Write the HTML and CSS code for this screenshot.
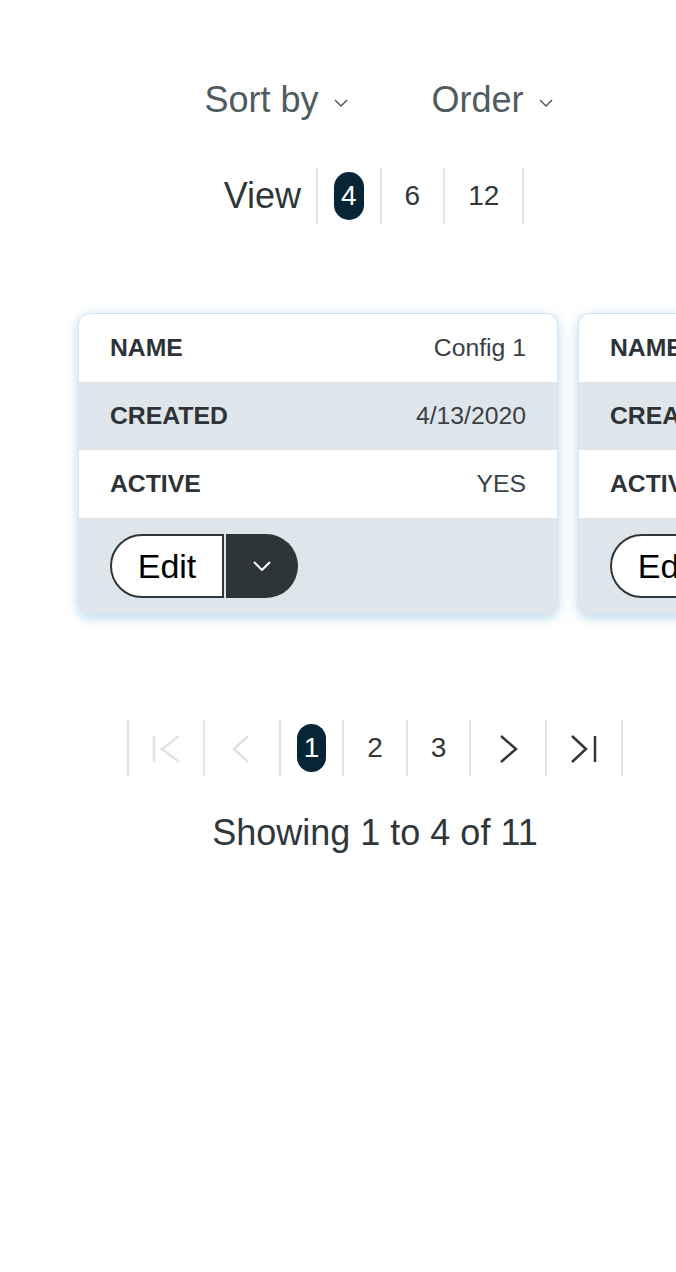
FILE: index.html
```html
<!DOCTYPE html>
<html lang="en">
<head>
<meta charset="utf-8">
<title>Configurations</title>
<link rel="stylesheet" href="styles.css">
</head>
<body>
<div class="page">
  <div class="sort-row">
    <button class="dd">Sort by <svg class="dd-chev" width="14" height="8" viewBox="0 0 14 8"><polyline points="1,1 7,7 13,1" fill="none" stroke="currentColor" stroke-width="1.5"/></svg></button>
    <button class="dd">Order <svg class="dd-chev" width="14" height="8" viewBox="0 0 14 8"><polyline points="1,1 7,7 13,1" fill="none" stroke="currentColor" stroke-width="1.5"/></svg></button>
  </div>

  <div class="view-row">
    <span class="view-label">View</span>
    <div class="seg">
      <div class="seg-item"><span class="pill active">4</span></div>
      <div class="seg-item"><span class="pill">6</span></div>
      <div class="seg-item"><span class="pill">12</span></div>
    </div>
  </div>

  <div class="cards">
    <div class="card">
      <div class="row"><span class="label">NAME</span><span class="value">Config 1</span></div>
      <div class="row alt"><span class="label">CREATED</span><span class="value">4/13/2020</span></div>
      <div class="row"><span class="label">ACTIVE</span><span class="value">YES</span></div>
      <div class="row alt actions">
        <button class="edit">Edit</button><button class="more"><svg width="18" height="10" viewBox="0 0 18 10"><polyline points="1,1 9,9 17,1" fill="none" stroke="#fff" stroke-width="2"/></svg></button>
      </div>
    </div>
    <div class="card">
      <div class="row"><span class="label">NAME</span><span class="value">Config 2</span></div>
      <div class="row alt"><span class="label">CREATED</span><span class="value">4/13/2020</span></div>
      <div class="row"><span class="label">ACTIVE</span><span class="value">YES</span></div>
      <div class="row alt actions">
        <button class="edit">Edit</button><button class="more"><svg width="18" height="10" viewBox="0 0 18 10"><polyline points="1,1 9,9 17,1" fill="none" stroke="#fff" stroke-width="2"/></svg></button>
      </div>
    </div>
  </div>

  <nav class="pager">
    <div class="seg-item icon-item disabled"><svg width="42" height="48" viewBox="0 0 42 48"><line x1="9" y1="12" x2="9" y2="38" stroke="currentColor" stroke-width="2.5"/><polyline points="34,12 17,25 34,38" fill="none" stroke="currentColor" stroke-width="2.5"/></svg></div>
    <div class="seg-item icon-item disabled"><svg width="42" height="48" viewBox="0 0 42 48"><polyline points="27,12 13,25 27,38" fill="none" stroke="currentColor" stroke-width="2.5"/></svg></div>
    <div class="seg-item"><span class="pill active">1</span></div>
    <div class="seg-item"><span class="pill">2</span></div>
    <div class="seg-item"><span class="pill">3</span></div>
    <div class="seg-item icon-item"><svg width="42" height="48" viewBox="0 0 42 48"><polyline points="14,12 29,25 14,38" fill="none" stroke="currentColor" stroke-width="2.5"/></svg></div>
    <div class="seg-item icon-item"><svg width="42" height="48" viewBox="0 0 42 48"><polyline points="9,12 23,25 9,38" fill="none" stroke="currentColor" stroke-width="2.5"/><line x1="32" y1="12" x2="32" y2="38" stroke="currentColor" stroke-width="2.5"/></svg></div>
  </nav>

  <p class="showing">Showing 1 to 4 of 11</p>
</div>
</body>
</html>
```

FILE: styles.css
```css
html, body {
  margin: 0;
  padding: 0;
  background: #ffffff;
  overflow: hidden;
}

body {
  font-family: "Liberation Sans", Arial, sans-serif;
  color: #2f3538;
}

.page {
  width: 750px;
  display: flex;
  flex-direction: column;
  align-items: center;
}

.sort-row {
  margin-top: 80px;
  height: 40px;
  display: flex;
  align-items: center;
  gap: 84px;
  padding-left: 7px;
}

.dd {
  border: 0;
  background: none;
  padding: 0;
  font-family: inherit;
  font-size: 36px;
  line-height: 40px;
  color: #505b61;
  display: flex;
  align-items: center;
}

.dd-chev {
  margin-left: 15px;
  margin-top: 6px;
}

.view-row {
  margin-top: 48px;
  margin-right: 2px;
  height: 56px;
  display: flex;
  align-items: stretch;
}

.view-label {
  font-size: 36px;
  line-height: 56px;
  color: #30373b;
  margin-right: 15px;
}

.seg {
  display: flex;
}

.seg-item {
  border-left: 2px solid #dce6ec;
  padding: 0 16px;
  display: flex;
  align-items: center;
  height: 56px;
}

.seg-item:last-child {
  border-right: 2px solid #dce6ec;
}

.pill {
  display: inline-block;
  height: 48px;
  line-height: 48px;
  padding: 0 7px;
  border-radius: 15px;
  font-size: 28px;
  color: #30373b;
}

.pill.active {
  background: #062638;
  color: #ffffff;
}

.cards {
  margin-top: 79px;
  align-self: stretch;
  display: flex;
  gap: 20px;
  padding: 10px 0 12px 78px;
  overflow: hidden;
}

.card {
  flex: 0 0 480px;
  box-sizing: border-box;
  border: 1px solid #d5e5ef;
  border-radius: 12px;
  overflow: hidden;
  background: #ffffff;
  box-shadow: 0 3px 12px rgba(135, 188, 222, 0.6);
}

.row {
  height: 68px;
  display: flex;
  align-items: center;
  justify-content: space-between;
  padding: 0 31px;
  font-size: 24.75px;
}

.row.alt {
  background: #dfe6eb;
}

.label {
  font-weight: bold;
  color: #2d3336;
}

.value {
  color: #3a4045;
}

.row.actions {
  height: auto;
  padding: 16px 31px;
  justify-content: flex-start;
  gap: 2px;
}

.edit {
  width: 114px;
  height: 64px;
  box-sizing: border-box;
  border: 2px solid #2f3538;
  border-radius: 32px 0 0 32px;
  background: #ffffff;
  font-family: inherit;
  font-size: 34px;
  color: #000000;
  padding: 0;
}

.more {
  width: 72px;
  height: 64px;
  border: 0;
  border-radius: 0 32px 32px 0;
  background: #2e3538;
  padding: 0;
  display: flex;
  align-items: center;
  justify-content: center;
}

.pager {
  margin-top: 93px;
  margin-right: 0;
  display: flex;
}

.icon-item {
  color: #2f3538;
}

.icon-item svg {
  display: block;
}

.icon-item.disabled {
  color: #e0e2e3;
}

.showing {
  margin: 37px 0 0;
  font-size: 36px;
  line-height: 40px;
  color: #30373b;
}
```
